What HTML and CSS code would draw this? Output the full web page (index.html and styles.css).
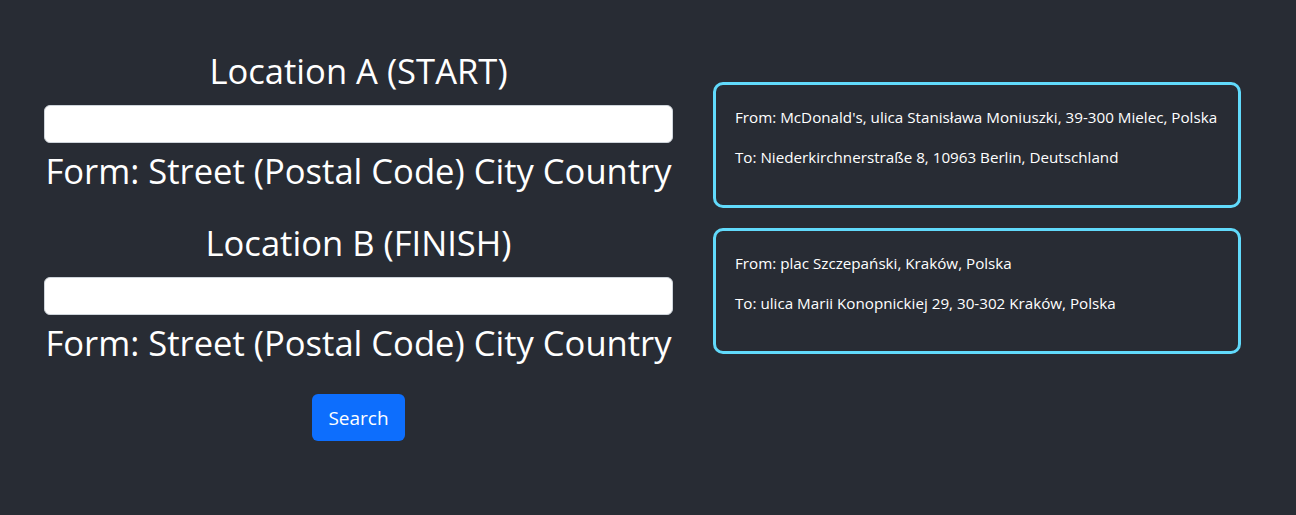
FILE: index.html
```html
<!DOCTYPE html>
<html lang="en">
<head>
<meta charset="utf-8">
<title>Route search</title>
<link rel="stylesheet" href="styles.css">
</head>
<body>
<div class="app">
  <div class="form-col">
    <h2 class="title">Location A (START)</h2>
    <input class="field" type="text">
    <p class="hint">Form: Street (Postal Code) City Country</p>
    <h2 class="title">Location B (FINISH)</h2>
    <input class="field" type="text">
    <p class="hint">Form: Street (Postal Code) City Country</p>
    <button class="btn" type="button">Search</button>
  </div>
  <div class="results">
    <div class="card">
      <p class="line">From: McDonald's, ulica Stanisława Moniuszki, 39-300 Mielec, Polska</p>
      <p class="line">To: Niederkirchnerstraße 8, 10963 Berlin, Deutschland</p>
    </div>
    <div class="card">
      <p class="line">From: plac Szczepański, Kraków, Polska</p>
      <p class="line">To: ulica Marii Konopnickiej 29, 30-302 Kraków, Polska</p>
    </div>
  </div>
</div>
</body>
</html>
```

FILE: styles.css
```css
html, body {
  margin: 0;
  padding: 0;
  background: #282c34;
  color: #ffffff;
  font-family: "Open Sans", "Noto Sans", sans-serif;
  height: 100%;
}

.app {
  display: flex;
  align-items: flex-start;
  gap: 40px;
  padding: 52px 0 0 44px;
}

.form-col {
  display: flex;
  flex-direction: column;
  align-items: stretch;
  width: 629px;
}

.title {
  margin: 0;
  font-size: 34.6px;
  font-weight: 400;
  line-height: 38px;
  text-align: center;
}

.field {
  box-sizing: border-box;
  height: 38px;
  margin-top: 15px;
  width: 100%;
  border: 1px solid #ced4da;
  border-radius: 6px;
  background: #fff;
}

.hint {
  margin: 9px 0 34px;
  font-size: 34.6px;
  line-height: 38px;
  text-align: center;
  white-space: nowrap;
}

.btn {
  align-self: center;
  margin-top: -2px;
  height: 47px;
  width: 93px;
  border: none;
  border-radius: 6px;
  background: #0d6efd;
  color: #fff;
  font-family: inherit;
  font-size: 19px;
}

.results {
  display: flex;
  flex-direction: column;
  gap: 20px;
  padding-top: 30px;
}

.card {
  box-sizing: border-box;
  width: 528px;
  height: 126px;
  border: 3px solid #61dafb;
  border-radius: 10px;
  padding: 21px 19px 20px;
}

.line {
  margin: 0 0 18px;
  font-size: 15.2px;
  line-height: 22px;
  white-space: nowrap;
}
```
